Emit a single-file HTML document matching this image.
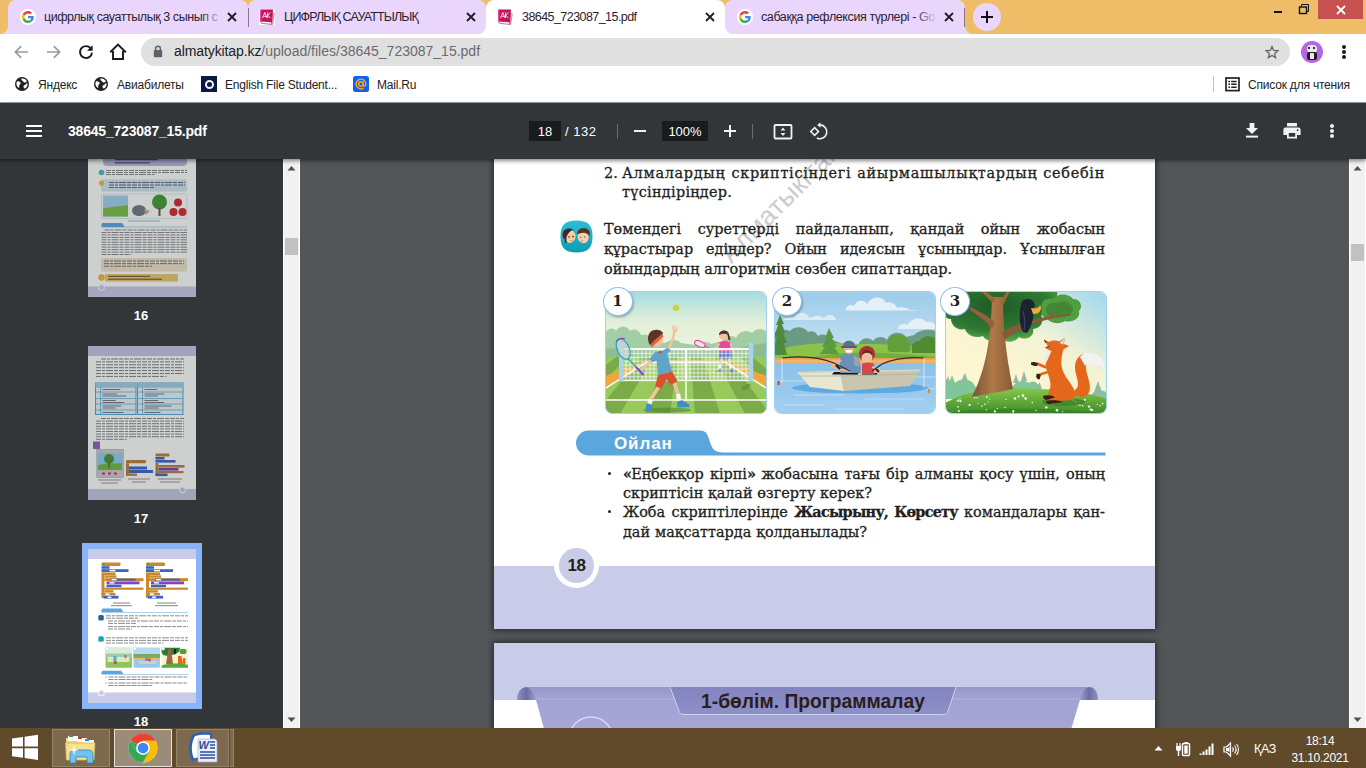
<!DOCTYPE html>
<html lang="kk">
<head>
<meta charset="utf-8">
<title>38645_723087_15.pdf</title>
<style>
*{box-sizing:border-box;margin:0;padding:0}
html,body{width:1366px;height:768px;overflow:hidden;background:#525659;font-family:"Liberation Sans","DejaVu Sans",sans-serif;}
.abs{position:absolute}
#root{position:relative;width:1366px;height:768px;overflow:hidden}
/* tab strip */
#tabstrip{position:absolute;left:0;top:0;width:1366px;height:34px;background:#efbc68}
.tab{position:absolute;top:0;height:34px;background:#ead6fd;border-radius:8px 8px 0 0}
.tab.active{background:#fff}
.tab .ttl{position:absolute;left:36px;top:10px;font-size:12.5px;color:#2b2230;white-space:nowrap;overflow:hidden;letter-spacing:-0.1px}
.tab .cls{position:absolute;top:8px;width:16px;height:16px}
.foot{position:absolute;top:26px;width:8px;height:8px}
/* toolbar */
#toolbar{position:absolute;left:0;top:34px;width:1366px;height:34px;background:#fff}
#omni{position:absolute;left:141px;top:4px;width:1149px;height:28px;border-radius:14px;background:#e0e0e0}
#bookmarks{position:absolute;left:0;top:68px;width:1366px;height:34px;background:#fff}
.bm{position:absolute;top:10px;font-size:12px;line-height:14px;color:#222;white-space:nowrap;letter-spacing:-.2px}
/* pdf toolbar */
#pdfbar{position:absolute;left:0;top:103px;width:1366px;height:56px;background:#323639;box-shadow:0 2px 4px rgba(0,0,0,.45);z-index:5;color:#fff}
#side{position:absolute;left:0;top:158px;width:283px;height:570px;background:#323639;overflow:hidden}
#sidescroll{position:absolute;left:283px;top:158px;width:17px;height:570px;background:#f1f1f1}
#main{position:absolute;left:300px;top:158px;width:1049px;height:570px;background:#525659;overflow:hidden}
#mainscroll{position:absolute;left:1349px;top:158px;width:17px;height:570px;background:#f1f1f1}
#taskbar{position:absolute;left:0;top:728px;width:1366px;height:40px;background:#604a2a;z-index:9}

#canvas{position:absolute;left:-300px;top:-158px;width:1366px;height:768px}
.page{position:absolute;left:494px;width:661px;background:#fff;box-shadow:0 0 6px 1px rgba(0,0,0,.55)}
.ln{position:absolute;font-family:"DejaVu Serif","Liberation Serif",serif;font-size:14.4px;line-height:20px;color:#231f20;white-space:nowrap;text-align:justify;text-align-last:justify;-webkit-text-stroke:.3px #231f20}
.ln b{font-weight:bold;letter-spacing:-.75px}
.num{position:absolute;width:30px;height:29px;border-radius:50%;background:#fff;border:1.5px solid #8cc4ea;box-shadow:1px 1.5px 2px rgba(60,90,120,.45);font-family:"DejaVu Serif","Liberation Serif",serif;font-weight:bold;font-size:15px;line-height:26px;text-align:center;color:#231f20}
.pic{position:absolute;top:291px;width:162px;height:123px;border-radius:7px;border:1px solid #9fd2f0;overflow:hidden}
</style>
</head>
<body>
<div id="root">

<div id="tabstrip">
<svg class="abs" style="left:0px;top:26px" width="8" height="8" viewBox="0 0 8 8"><path d="M0 8 A8 8 0 0 0 8 0 L8 8Z" fill="#ead6fd"/></svg>
<svg class="abs" style="left:248px;top:26px" width="8" height="8" viewBox="0 0 8 8"><path d="M8 8 A8 8 0 0 1 0 0 L0 8Z" fill="#ead6fd"/></svg>
<svg class="abs" style="left:240px;top:26px" width="8" height="8" viewBox="0 0 8 8"><path d="M0 8 A8 8 0 0 0 8 0 L8 8Z" fill="#ead6fd"/></svg>
<svg class="abs" style="left:486px;top:26px" width="8" height="8" viewBox="0 0 8 8"><path d="M8 8 A8 8 0 0 1 0 0 L0 8Z" fill="#ead6fd"/></svg>
<svg class="abs" style="left:717px;top:26px" width="8" height="8" viewBox="0 0 8 8"><path d="M0 8 A8 8 0 0 0 8 0 L8 8Z" fill="#ead6fd"/></svg>
<svg class="abs" style="left:965px;top:26px" width="8" height="8" viewBox="0 0 8 8"><path d="M8 8 A8 8 0 0 1 0 0 L0 8Z" fill="#ead6fd"/></svg>
<div class="tab" style="left:8px;width:240px"><svg class="abs" style="left:12px;top:9px" width="16" height="16" viewBox="0 0 48 48"><circle cx="24" cy="24" r="24" fill="#fff"/><g transform="translate(6 6) scale(.75)"><path fill="#EA4335" d="M24 9.5c3.54 0 6.71 1.22 9.21 3.6l6.85-6.85C35.9 2.38 30.47 0 24 0 14.62 0 6.51 5.38 2.56 13.22l7.98 6.19C12.43 13.72 17.74 9.5 24 9.5z"/><path fill="#4285F4" d="M46.98 24.55c0-1.57-.15-3.09-.38-4.55H24v9.02h12.94c-.58 2.96-2.26 5.48-4.78 7.18l7.73 6c4.51-4.18 7.09-10.36 7.09-17.65z"/><path fill="#FBBC05" d="M10.53 28.59c-.48-1.45-.76-2.99-.76-4.59s.27-3.14.76-4.59l-7.98-6.19C.92 16.46 0 20.12 0 24c0 3.88.92 7.54 2.56 10.78l7.97-6.19z"/><path fill="#34A853" d="M24 48c6.48 0 11.93-2.13 15.89-5.81l-7.73-6c-2.15 1.45-4.92 2.3-8.16 2.3-6.26 0-11.57-4.22-13.47-9.91l-7.98 6.19C6.51 42.62 14.62 48 24 48z"/></g></svg><div class="ttl" style="width:179px;letter-spacing:-0.44px">цифрлық сауаттылық 3 сынып с</div><div class="abs" style="left:193px;top:6px;width:22px;height:22px;background:linear-gradient(90deg,rgba(234,214,253,0),#ead6fd)"></div><svg class="abs" style="left:216px;top:9px" width="16" height="16" viewBox="0 0 16 16"><path d="M4 4 L12 12 M12 4 L4 12" stroke="#1d1d1f" stroke-width="1.8" fill="none"/></svg></div>
<div class="tab" style="left:248px;width:238px"><svg class="abs" style="left:11px;top:9px" width="16" height="16" viewBox="0 0 16 16"><rect width="16" height="16" fill="#fff"/><path d="M13.800 4.200 L15.300 4.800 L13.700 15.300 L12.400 15.500Z" fill="#f2d9e4" stroke="#a8285e" stroke-width=".5"/><path d="M1.600 12 L12.800 13 L12.600 15.400 L2.400 14.300Z" fill="#fdfdfd" stroke="#a01550" stroke-width=".6"/><path d="M1.400 .6 L14 .4 L13 13.200 L1.500 12.300 C1 9 1 4 1.400 .6Z" fill="#c8105e"/><path d="M1.400 .6 L2.600 .6 C2.200 4 2.200 9 2.600 12.400 L1.500 12.300 C1 9 1 4 1.400 .6Z" fill="#e0508c"/><path d="M3.600 9 L5.800 3.400 L8 9 M4.400 7.300 H7.200 M8.600 3.400 V9 M11.400 3.400 L8.800 6.400 L11.600 9" stroke="#fff" stroke-width=".85" fill="none"/></svg><div class="ttl" style="width:180px;letter-spacing:-0.85px">ЦИФРЛЫҚ САУАТТЫЛЫҚ</div><svg class="abs" style="left:215px;top:9px" width="16" height="16" viewBox="0 0 16 16"><path d="M4 4 L12 12 M12 4 L4 12" stroke="#1d1d1f" stroke-width="1.8" fill="none"/></svg></div>
<div class="tab active" style="left:486px;width:239px"><svg class="abs" style="left:11px;top:9px" width="16" height="16" viewBox="0 0 16 16"><rect width="16" height="16" fill="#fff"/><path d="M13.800 4.200 L15.300 4.800 L13.700 15.300 L12.400 15.500Z" fill="#f2d9e4" stroke="#a8285e" stroke-width=".5"/><path d="M1.600 12 L12.800 13 L12.600 15.400 L2.400 14.300Z" fill="#fdfdfd" stroke="#a01550" stroke-width=".6"/><path d="M1.400 .6 L14 .4 L13 13.200 L1.500 12.300 C1 9 1 4 1.400 .6Z" fill="#c8105e"/><path d="M1.400 .6 L2.600 .6 C2.200 4 2.200 9 2.600 12.400 L1.500 12.300 C1 9 1 4 1.400 .6Z" fill="#e0508c"/><path d="M3.600 9 L5.800 3.400 L8 9 M4.400 7.300 H7.200 M8.600 3.400 V9 M11.400 3.400 L8.800 6.400 L11.600 9" stroke="#fff" stroke-width=".85" fill="none"/></svg><div class="ttl" style="width:180px;letter-spacing:-0.56px">38645_723087_15.pdf</div><svg class="abs" style="left:216px;top:9px" width="16" height="16" viewBox="0 0 16 16"><path d="M4 4 L12 12 M12 4 L4 12" stroke="#1d1d1f" stroke-width="1.8" fill="none"/></svg></div>
<div class="tab" style="left:725px;width:240px"><svg class="abs" style="left:12px;top:9px" width="16" height="16" viewBox="0 0 48 48"><circle cx="24" cy="24" r="24" fill="#fff"/><g transform="translate(6 6) scale(.75)"><path fill="#EA4335" d="M24 9.5c3.54 0 6.71 1.22 9.21 3.6l6.85-6.85C35.9 2.38 30.47 0 24 0 14.62 0 6.51 5.38 2.56 13.22l7.98 6.19C12.43 13.72 17.74 9.5 24 9.5z"/><path fill="#4285F4" d="M46.98 24.55c0-1.57-.15-3.09-.38-4.55H24v9.02h12.94c-.58 2.96-2.26 5.48-4.78 7.18l7.73 6c4.51-4.18 7.09-10.36 7.09-17.65z"/><path fill="#FBBC05" d="M10.53 28.59c-.48-1.45-.76-2.99-.76-4.59s.27-3.14.76-4.59l-7.98-6.19C.92 16.46 0 20.12 0 24c0 3.88.92 7.54 2.56 10.78l7.97-6.19z"/><path fill="#34A853" d="M24 48c6.48 0 11.93-2.13 15.89-5.81l-7.73-6c-2.15 1.45-4.92 2.3-8.16 2.3-6.26 0-11.57-4.22-13.47-9.91l-7.98 6.19C6.51 42.62 14.62 48 24 48z"/></g></svg><div class="ttl" style="width:176px;letter-spacing:-0.4px">сабаққа рефлексия түрлері - Go</div><div class="abs" style="left:190px;top:6px;width:22px;height:22px;background:linear-gradient(90deg,rgba(234,214,253,0),#ead6fd)"></div><svg class="abs" style="left:216px;top:9px" width="16" height="16" viewBox="0 0 16 16"><path d="M4 4 L12 12 M12 4 L4 12" stroke="#1d1d1f" stroke-width="1.8" fill="none"/></svg></div>
<svg class="abs" style="left:478px;top:26px" width="8" height="8" viewBox="0 0 8 8"><path d="M0 8 A8 8 0 0 0 8 0 L8 8Z" fill="#fff"/></svg>
<svg class="abs" style="left:725px;top:26px" width="8" height="8" viewBox="0 0 8 8"><path d="M8 8 A8 8 0 0 1 0 0 L0 8Z" fill="#fff"/></svg>
<div class="abs" style="left:248px;top:8px;width:1px;height:19px;background:#8a7686"></div>
<div class="abs" style="left:964px;top:8px;width:1px;height:19px;background:#8a7686"></div>
<div class="abs" style="left:973px;top:3px;width:28px;height:28px;border-radius:14px;background:#ead6fd"></div><svg class="abs" style="left:979px;top:9px" width="16" height="16" viewBox="0 0 16 16"><path d="M8 2 V14 M2 8 H14" stroke="#111" stroke-width="2" fill="none"/></svg>
<div class="abs" style="left:1274px;top:11px;width:8px;height:2px;background:#111"></div>
<svg class="abs" style="left:1298px;top:3px" width="12" height="12" viewBox="0 0 12 12"><path d="M3.5 3.5 V1.5 H10.5 V8.5 H8.5" stroke="#111" stroke-width="1" fill="none"/><rect x="1.5" y="4" width="7" height="6.5" stroke="#111" stroke-width="1.4" fill="none"/></svg>
<div class="abs" style="left:1318px;top:0;width:45px;height:19px;background:#c75050"></div><svg class="abs" style="left:1335px;top:4px" width="12" height="12" viewBox="0 0 12 12"><path d="M2 2 L10 10 M10 2 L2 10" stroke="#fff" stroke-width="1.8" fill="none"/></svg>
</div>
<div id="toolbar"><div id="omni"></div>
<svg class="abs" style="left:13px;top:10px" width="16" height="16" viewBox="0 0 16 16"><path d="M15 8 H3 M8.2 2.2 L2.4 8 L8.2 13.8" stroke="#9a9a9a" stroke-width="1.7" fill="none"/></svg>
<svg class="abs" style="left:46px;top:10px" width="16" height="16" viewBox="0 0 16 16"><path d="M1 8 H13 M7.8 2.2 L13.6 8 L7.8 13.8" stroke="#9a9a9a" stroke-width="1.7" fill="none"/></svg>
<svg class="abs" style="left:78px;top:10px" width="16" height="16" viewBox="0 0 16 16"><path d="M12.6 4.2 A6 6 0 1 0 14 8.6" stroke="#1a1a1a" stroke-width="1.9" fill="none"/><path d="M14.6 1.2 V6.8 H9Z" fill="#1a1a1a"/></svg>
<svg class="abs" style="left:109px;top:9px" width="18" height="18" viewBox="0 0 18 18"><path d="M1.2 9.2 L9 1.6 L16.8 9.2 M4 8 V16 H14 V8" stroke="#1a1a1a" stroke-width="1.9" fill="none" stroke-linejoin="miter"/></svg>
<svg class="abs" style="left:153px;top:11px" width="10" height="13" viewBox="0 0 10 13"><path d="M2.6 5.5 V3.6 A2.4 2.4 0 0 1 7.4 3.6 V5.5" stroke="#5f6368" stroke-width="1.5" fill="none"/><rect x="0.8" y="5" width="8.4" height="7.2" rx="1" fill="#5f6368"/></svg>
<div class="abs" style="left:174px;top:9px;font-size:14px;line-height:17px;color:#202124;white-space:nowrap;letter-spacing:-0.1px">almatykitap.kz<span style="color:#686b6f;letter-spacing:0">/upload/files/38645_723087_15.pdf</span></div>
<svg class="abs" style="left:1264px;top:10px" width="16" height="16" viewBox="0 0 24 24"><path d="M12 3.8 L14.5 9.6 L20.8 10.1 L16 14.3 L17.5 20.5 L12 17.2 L6.5 20.5 L8 14.3 L3.2 10.1 L9.5 9.6Z" stroke="#5f6368" stroke-width="1.9" fill="none" stroke-linejoin="miter"/></svg>
<div class="abs" style="left:1301px;top:7px;width:22px;height:22px;border-radius:11px;background:#b566e2;overflow:hidden"><div class="abs" style="left:6px;top:4px;width:10px;height:8px;border-radius:4px;background:#ececec"></div><div class="abs" style="left:6px;top:11px;width:10px;height:8px;border-radius:2px;background:#1f1f1f"></div><div class="abs" style="left:9px;top:12px;width:4px;height:6px;background:#e8e8e8"></div><div class="abs" style="left:7px;top:6px;width:2px;height:2px;background:#333"></div><div class="abs" style="left:12px;top:6px;width:2px;height:2px;background:#333"></div></div>
<div class="abs" style="left:1342.3px;top:11.300px;width:3.400px;height:3.400px;border-radius:2px;background:#1a1a1a;box-shadow:0 5px 0 #1a1a1a,0 10px 0 #1a1a1a"></div>
</div>
<div id="bookmarks">
<svg class="abs" style="left:15px;top:9px" width="14" height="14" viewBox="0 0 14 14"><circle cx="7" cy="7" r="7" fill="#202124"/><path d="M2.2 4.2 C3.5 4 4.8 4.6 5.6 5.6 C6.2 6.6 5 7.4 4.4 8 C4 8.8 4.6 10.2 4 11 C2.6 10.2 1.4 8.6 1.4 6.8 C1.4 5.8 1.7 4.9 2.2 4.2Z M7.4 1.4 C9.4 1.5 11.2 2.6 12 4.4 C11 4.6 10.4 5.6 9.4 5.6 C8.6 5.4 8.4 4.4 7.6 4 C6.8 3.6 6.2 2.8 6.4 1.5Z M12.5 6.4 C12.7 8.4 11.8 10.6 9.8 11.8 C9.6 10.8 8.4 10.4 8.4 9.4 C8.6 8.2 10 8.2 10.6 7.4 C11.2 6.8 11.8 6.2 12.5 6.4Z" fill="#fff"/></svg><div class="bm" style="left:38px">Яндекс</div>
<svg class="abs" style="left:94px;top:9px" width="14" height="14" viewBox="0 0 14 14"><circle cx="7" cy="7" r="7" fill="#202124"/><path d="M2.2 4.2 C3.5 4 4.8 4.6 5.6 5.6 C6.2 6.6 5 7.4 4.4 8 C4 8.8 4.6 10.2 4 11 C2.6 10.2 1.4 8.6 1.4 6.8 C1.4 5.8 1.7 4.9 2.2 4.2Z M7.4 1.4 C9.4 1.5 11.2 2.6 12 4.4 C11 4.6 10.4 5.6 9.4 5.6 C8.6 5.4 8.4 4.4 7.6 4 C6.8 3.6 6.2 2.8 6.4 1.5Z M12.5 6.4 C12.7 8.4 11.8 10.6 9.8 11.8 C9.6 10.8 8.4 10.4 8.4 9.4 C8.6 8.2 10 8.2 10.6 7.4 C11.2 6.8 11.8 6.2 12.5 6.4Z" fill="#fff"/></svg><div class="bm" style="left:117px">Авиабилеты</div>
<div class="abs" style="left:201px;top:8px;width:16px;height:16px;background:#0a1846"></div><div class="abs" style="left:204.500px;top:11.500px;width:9px;height:9px;border-radius:5px;border:2.200px solid #f4f4f6"></div><div class="bm" style="left:225px">English File Student...</div>
<svg class="abs" style="left:353px;top:8px" width="16" height="16" viewBox="0 0 16 16"><rect width="16" height="16" rx="2.500" fill="#0a63f5"/><circle cx="8" cy="8" r="2.300" stroke="#ffa21a" stroke-width="1.500" fill="none"/><path d="M10.300 5.600 V9 C10.300 10.600 12.900 10.600 12.900 8 A4.900 4.900 0 1 0 10.600 12.200" stroke="#ffa21a" stroke-width="1.400" fill="none"/></svg><div class="bm" style="left:377px">Mail.Ru</div>
<div class="abs" style="left:1213px;top:8px;width:1px;height:16px;background:#c4c4c4"></div><svg class="abs" style="left:1225px;top:9px" width="15" height="15" viewBox="0 0 15 15"><rect x="1" y="1" width="13" height="12.6" stroke="#202124" stroke-width="1.7" fill="none"/><path d="M3.4 4.4 H5 M6.2 4.4 H11.6 M3.4 7.3 H5 M6.2 7.3 H11.6 M3.4 10.2 H5 M6.2 10.2 H11.6" stroke="#202124" stroke-width="1.5"/></svg><div class="bm" style="left:1248px">Список для чтения</div>
</div>
<div class="abs" style="left:0;top:102px;width:1366px;height:1px;background:#9b9d9f"></div>
<div id="pdfbar">
<div class="abs" style="left:26px;top:22px;width:16px;height:2px;background:#fff;box-shadow:0 5px 0 #fff,0 10px 0 #fff"></div>
<div class="abs" style="left:68px;top:20px;font-size:14px;line-height:17px;font-weight:bold;color:#fff;white-space:nowrap;letter-spacing:-0.2px">38645_723087_15.pdf</div>
<div class="abs" style="left:529px;top:18px;width:32px;height:20px;background:#191b1c;color:#fff;font-size:13px;line-height:22px;text-align:center">18</div>
<div class="abs" style="left:565px;top:18px;font-size:13px;line-height:22px;color:#fff;white-space:nowrap;letter-spacing:.5px">/ 132</div>
<div class="abs" style="left:617px;top:21px;width:1px;height:15px;background:#6a6d70"></div>
<div class="abs" style="left:634px;top:27px;width:12px;height:2px;background:#f1f1f1"></div>
<div class="abs" style="left:662px;top:18px;width:46px;height:20px;background:#191b1c;color:#fff;font-size:13px;line-height:22px;text-align:center">100%</div>
<div class="abs" style="left:724px;top:27px;width:12px;height:2px;background:#f1f1f1"></div><div class="abs" style="left:729px;top:22px;width:2px;height:12px;background:#f1f1f1"></div>
<div class="abs" style="left:752px;top:21px;width:1px;height:15px;background:#6a6d70"></div>
<svg class="abs" style="left:773px;top:20px" width="20" height="18" viewBox="0 0 20 18"><rect x="1.5" y="2" width="17" height="13.5" rx="1" stroke="#f1f1f1" stroke-width="1.8" fill="none"/><path d="M10 4.6 L12.4 7.4 H7.6Z M10 12.9 L12.4 10.1 H7.6Z" fill="#f1f1f1"/></svg>
<svg class="abs" style="left:809px;top:19px" width="20" height="20" viewBox="0 0 22 22"><path d="M12.2 3.2 A7.6 7.6 0 1 1 8.6 17.6" stroke="#f1f1f1" stroke-width="1.8" fill="none"/><path d="M12.6 0.2 V6.4 L9 3.3Z" fill="#f1f1f1"/><rect x="3.2" y="7.4" width="6" height="6" transform="rotate(45 6.2 10.4)" stroke="#f1f1f1" stroke-width="1.7" fill="none"/></svg>
<svg class="abs" style="left:1245px;top:19px" width="14" height="17" viewBox="0 0 14 17"><path d="M4.6 1 H9.4 V6 H13 L7 12 L1 6 H4.6Z" fill="#f1f1f1"/><rect x="1" y="13.6" width="12" height="2" fill="#f1f1f1"/></svg>
<svg class="abs" style="left:1283px;top:19px" width="18" height="18" viewBox="0 0 18 18"><rect x="4" y="1" width="10" height="3.4" fill="#f1f1f1"/><path d="M2.6 5.6 H15.4 A2.2 2.2 0 0 1 17.6 7.8 V13 H14 V16.6 H4 V13 H0.4 V7.8 A2.2 2.2 0 0 1 2.6 5.6Z M5.8 11 V14.8 H12.2 V11Z" fill="#f1f1f1" fill-rule="evenodd"/><circle cx="14.6" cy="8.2" r="0.9" fill="#323639"/></svg>
<div class="abs" style="left:1330px;top:21px;width:4px;height:4px;border-radius:2px;background:#f1f1f1;box-shadow:0 5px 0 #f1f1f1,0 10px 0 #f1f1f1"></div>
</div>
<div id="side"><div class="abs" style="left:0;top:-158px;width:283px;height:768px">
<svg class="abs" style="left:88px;top:143px;opacity:.76" width="108" height="154" viewBox="0 0 108 154">
<rect width="108" height="154" fill="#fff"/>
<rect x="15" y="13" width="84" height="10" rx="4" fill="#b8b8e2"/><path d="M27 16.500 H70 M27 19.800 H62" stroke="#4a4a78" stroke-width="1.300"/>
<circle cx="13.500" cy="29.500" r="2.800" fill="#56b7c9"/><path d="M18.0 27.5 H99.0 M18.0 29.5 H99.0 M18.0 31.5 H66.6 " stroke="#777" stroke-width="0.9" stroke-dasharray="5 1 3 1 7 1 4 1" fill="none"/>
<rect x="13" y="36.500" width="86" height="12" rx="1.500" fill="#cfe6ee"/><circle cx="13.500" cy="40" r="2.600" fill="#e7c23a"/><path d="M21.0 39.5 H97.0 M21.0 42.0 H97.0 M21.0 44.5 H66.6 " stroke="#557" stroke-width="0.9" stroke-dasharray="5 1 3 1 7 1 4 1" fill="none"/>
<rect x="13.500" y="51" width="85.500" height="24.500" rx="1.500" fill="#fff" stroke="#bfe0f0" stroke-width=".7"/>
<rect x="15" y="52.500" width="25" height="21" fill="#9fd3f0"/><path d="M15 66 C22 63 32 64 40 62 V73.500 H15Z" fill="#7cc043"/>
<ellipse cx="51" cy="67.500" rx="7" ry="5.500" fill="#6c7a86"/><path d="M56 66 l6 2 l-4 4Z" fill="#d9a77c"/>
<circle cx="71.500" cy="59" r="7.500" fill="#3f9a35"/><rect x="70.500" y="65" width="2" height="8" fill="#7a5230"/>
<circle cx="90" cy="59.500" r="4" fill="#d8262c"/><circle cx="85.500" cy="69" r="4" fill="#d8262c"/><circle cx="94.500" cy="69" r="4" fill="#d8262c"/>
<path d="M40 78 H72" stroke="#999" stroke-width=".8"/>
<path d="M15 80 H34 L36.500 83.700 H99 V84.300 H13.500 V81.500 A1.500 1.500 0 0 1 15 80Z" fill="#5ba6dc"/>
<path d="M16.5 87.0 H99.0 M13.5 89.5 H99.0 M13.5 91.9 H99.0 M13.5 94.4 H99.0 M13.5 96.8 H99.0 M13.5 99.3 H99.0 M13.5 101.7 H99.0 M13.5 104.2 H99.0 M13.5 106.6 H99.0 M13.5 109.1 H99.0 M13.5 111.5 H43.4 " stroke="#85858a" stroke-width="1.0" stroke-dasharray="5 1 3 1 7 1 4 1" fill="none"/>
<rect x="13" y="115" width="86" height="13.500" rx="1.500" fill="#efe4cf"/><path d="M16.0 118.0 H96.0 M16.0 120.6 H96.0 M16.0 123.2 H64.0 " stroke="#6a6a6a" stroke-width="0.9" stroke-dasharray="5 1 3 1 7 1 4 1" fill="none"/>
<rect x="17" y="131" width="73" height="7.500" rx="1" fill="#ecc96f"/><circle cx="13.500" cy="134.500" r="3.200" fill="#f0b630"/><path d="M20 133.300 H62 M20 136.200 H74" stroke="#5a4a20" stroke-width="1"/>
<rect y="143.500" width="108" height="10.500" fill="#c9cce8"/><circle cx="13.500" cy="144.500" r="3" fill="#c9cce8" stroke="#fff" stroke-width="1"/>
</svg><div class="abs" style="left:111px;top:308px;width:60px;text-align:center;font-size:13px;line-height:16px;font-weight:bold;color:#fff">16</div>
<svg class="abs" style="left:88px;top:346px;opacity:.76" width="108" height="154" viewBox="0 0 108 154">
<rect width="108" height="154" fill="#fff"/><rect width="108" height="10" fill="#c4c8e4"/>
<path d="M13.0 13.0 H96.0 M8.0 15.9 H96.0 M8.0 18.8 H96.0 M8.0 21.7 H96.0 M8.0 24.6 H96.0 M8.0 27.5 H96.0 M8.0 30.4 H78.4 " stroke="#7c7c82" stroke-width="1.0" stroke-dasharray="5 1 3 1 7 1 4 1" fill="none"/>
<rect x="7.5" y="37" width="40.5" height="31.5" fill="#e9f5fb" stroke="#4fa9d6" stroke-width="1"/><path d="M7.5 41 H48" stroke="#4fa9d6" stroke-width=".7"/><path d="M7.5 46 H48" stroke="#4fa9d6" stroke-width=".7"/><path d="M7.5 52.5 H48" stroke="#4fa9d6" stroke-width=".7"/><path d="M7.5 58 H48" stroke="#4fa9d6" stroke-width=".7"/><path d="M7.5 64 H48" stroke="#4fa9d6" stroke-width=".7"/><path d="M12.5 37 V68.5" stroke="#4fa9d6" stroke-width=".7"/><rect x="7.5" y="37" width="40.5" height="4" fill="#9fd0ea"/><path d="M14.5 43.5 H32.3" stroke="#556" stroke-width=".8"/><path d="M14.5 48 H29.2" stroke="#556" stroke-width=".8"/><path d="M14.5 50 H38.2" stroke="#556" stroke-width=".8"/><path d="M14.5 54.5 H27.8" stroke="#556" stroke-width=".8"/><path d="M14.5 56.5 H36.1" stroke="#556" stroke-width=".8"/><path d="M14.5 60 H33.1" stroke="#556" stroke-width=".8"/><path d="M14.5 62 H27.5" stroke="#556" stroke-width=".8"/><path d="M14.5 66.5 H35.6" stroke="#556" stroke-width=".8"/><rect x="49.5" y="37" width="45.5" height="31.5" fill="#e9f5fb" stroke="#4fa9d6" stroke-width="1"/><path d="M49.5 41 H95" stroke="#4fa9d6" stroke-width=".7"/><path d="M49.5 46 H95" stroke="#4fa9d6" stroke-width=".7"/><path d="M49.5 52.5 H95" stroke="#4fa9d6" stroke-width=".7"/><path d="M49.5 58 H95" stroke="#4fa9d6" stroke-width=".7"/><path d="M49.5 64 H95" stroke="#4fa9d6" stroke-width=".7"/><path d="M54.5 37 V68.5" stroke="#4fa9d6" stroke-width=".7"/><rect x="49.5" y="37" width="45.5" height="4" fill="#9fd0ea"/><path d="M56.5 43.5 H69.2" stroke="#556" stroke-width=".8"/><path d="M56.5 48 H76.3" stroke="#556" stroke-width=".8"/><path d="M56.5 50 H69.8" stroke="#556" stroke-width=".8"/><path d="M56.5 54.5 H70.1" stroke="#556" stroke-width=".8"/><path d="M56.5 56.5 H76.1" stroke="#556" stroke-width=".8"/><path d="M56.5 60 H83.4" stroke="#556" stroke-width=".8"/><path d="M56.5 62 H70.7" stroke="#556" stroke-width=".8"/><path d="M56.5 66.5 H72.5" stroke="#556" stroke-width=".8"/>
<path d="M13.0 72.5 H96.0 M8.0 75.1 H96.0 M8.0 77.7 H96.0 M8.0 80.3 H96.0 M8.0 82.9 H96.0 M8.0 85.5 H96.0 M8.0 88.1 H96.0 M8.0 90.7 H96.0 M8.0 93.3 H38.8 " stroke="#85858a" stroke-width="1.0" stroke-dasharray="5 1 3 1 7 1 4 1" fill="none"/>
<rect x="5" y="95.500" width="7" height="7.500" fill="#8a62b8"/>
<rect x="8.800" y="103.500" width="26.500" height="28" fill="#c9cdd2" stroke="#9aa" stroke-width=".6"/><rect x="10" y="107" width="24" height="17" fill="#8fd0f2"/><path d="M10 119 C18 117 28 118 34 117 V124 H10Z" fill="#71b944"/><circle cx="21" cy="113" r="5" fill="#3f9a35"/><circle cx="19" cy="112" r="1" fill="#d33"/><circle cx="23" cy="114.500" r="1" fill="#d33"/><rect x="20.300" y="117" width="1.400" height="5" fill="#7a5230"/>
<path d="M14 127.500 h3 m3 0 h3 m3 0 h3" stroke="#d33" stroke-width="1.800"/>
<rect x="38" y="114" width="20" height="3.200" rx="1" fill="#b5803a"/><rect x="38" y="117.200" width="3" height="12.500" fill="#b5803a"/><rect x="41" y="120.500" width="18" height="3" fill="#3c63c8"/><rect x="41" y="124" width="24" height="3" fill="#3c63c8"/><rect x="38" y="127.500" width="11" height="2.400" fill="#b5803a"/>
<rect x="67.500" y="107.500" width="14" height="3" rx="1" fill="#b5803a"/><rect x="67.500" y="111" width="9" height="2.500" fill="#3c63c8"/><rect x="67.500" y="114" width="20" height="2.600" fill="#3c63c8"/><rect x="67.500" y="117" width="3" height="12" fill="#b5803a"/><rect x="70.500" y="119" width="26" height="2.600" fill="#b5803a"/><rect x="70.500" y="122" width="20" height="2.600" fill="#7a3fb0"/><rect x="70.500" y="125" width="25" height="2.200" fill="#b5803a"/><rect x="67.500" y="127.500" width="12" height="2.600" fill="#3c63c8"/>
<path d="M10 134 H33 M13 137 H30 M40 133 H62 M44 136 H58 M70 133 H94 M72 136 H92" stroke="#777" stroke-width=".8"/>
<rect y="143" width="108" height="11" fill="#c4c8e4"/><circle cx="94.500" cy="144" r="3" fill="#c4c8e4" stroke="#fff" stroke-width="1"/>
</svg><div class="abs" style="left:111px;top:511px;width:60px;text-align:center;font-size:13px;line-height:16px;font-weight:bold;color:#fff">17</div>
<div class="abs" style="left:82px;top:543px;width:120px;height:166px;background:#8ab4f8"></div>
<svg class="abs" style="left:88px;top:549px" width="108" height="154" viewBox="0 0 108 154">
<rect width="108" height="154" fill="#fff"/><rect width="108" height="10" fill="#c9cce8"/>
<rect x="13.5" y="13.500" width="19" height="3.400" rx="1.200" fill="#c88a2a"/><rect x="14.5" y="14.300" width="2" height="1.800" fill="#3aa84a"/>
<rect x="13.5" y="17.200" width="8" height="2.600" fill="#3b63c9"/><rect x="13.5" y="20.200" width="27" height="2.800" fill="#3b63c9"/><rect x="21.5" y="20.800" width="6" height="1.600" fill="#fff"/>
<rect x="13.5" y="23.400" width="14" height="2.600" fill="#c88a2a"/><rect x="13.5" y="26" width="3" height="23" fill="#c88a2a"/><rect x="16.5" y="26.300" width="12" height="2.400" fill="#c88a2a"/>
<rect x="16.5" y="29.200" width="39" height="3" fill="#c88a2a"/><rect x="22.5" y="29.700" width="25" height="2" fill="#3b63c9"/><rect x="23.5" y="30" width="5" height="1.400" fill="#fff"/>
<rect x="18.5" y="32.500" width="33" height="2.800" fill="#8a3fc0"/><rect x="21.5" y="33.200" width="5" height="1.400" fill="#fff"/>
<rect x="18.5" y="35.700" width="15" height="2.500" fill="#3b63c9"/><rect x="16.5" y="38.600" width="39" height="2.200" fill="#c88a2a"/>
<rect x="16.5" y="41.200" width="9" height="2.400" fill="#c88a2a"/><rect x="13.5" y="44" width="14" height="2.400" fill="#c88a2a"/><rect x="17.5" y="44.400" width="4" height="1.500" fill="#fff"/>
<rect x="15.5" y="46.800" width="15" height="2.800" fill="#3b63c9"/><rect x="19.5" y="47.400" width="4" height="1.500" rx=".7" fill="#fff"/><rect x="58" y="13.500" width="19" height="3.400" rx="1.200" fill="#c88a2a"/><rect x="59" y="14.300" width="2" height="1.800" fill="#3aa84a"/>
<rect x="58" y="17.200" width="8" height="2.600" fill="#3b63c9"/><rect x="58" y="20.200" width="27" height="2.800" fill="#3b63c9"/><rect x="66" y="20.800" width="6" height="1.600" fill="#fff"/>
<rect x="58" y="23.400" width="14" height="2.600" fill="#c88a2a"/><rect x="58" y="26" width="3" height="23" fill="#c88a2a"/><rect x="61" y="26.300" width="12" height="2.400" fill="#c88a2a"/>
<rect x="61" y="29.200" width="39" height="3" fill="#c88a2a"/><rect x="67" y="29.700" width="25" height="2" fill="#3b63c9"/><rect x="68" y="30" width="5" height="1.400" fill="#fff"/>
<rect x="63" y="32.500" width="33" height="2.800" fill="#8a3fc0"/><rect x="66" y="33.200" width="5" height="1.400" fill="#fff"/>
<rect x="63" y="35.700" width="15" height="2.500" fill="#3b63c9"/><rect x="61" y="38.600" width="39" height="2.200" fill="#c88a2a"/>
<rect x="61" y="41.200" width="9" height="2.400" fill="#c88a2a"/><rect x="58" y="44" width="14" height="2.400" fill="#c88a2a"/><rect x="62" y="44.400" width="4" height="1.500" fill="#fff"/>
<rect x="60" y="46.800" width="15" height="2.800" fill="#3b63c9"/><rect x="64" y="47.400" width="4" height="1.500" rx=".7" fill="#fff"/>
<path d="M25 54 H42 M23 56.700 H44 M69 54 H88 M67 56.700 H90" stroke="#666" stroke-width=".8"/>
<path d="M15 59.500 H33 L35.500 63 H100 V63.600 H13.500 V61 A1.500 1.500 0 0 1 15 59.500Z" fill="#5ba6dc"/>
<rect x="10.300" y="66" width="5.500" height="5.500" rx="1.500" fill="#2a5f9e"/>
<path d="M18.0 66.8 H100.0 M18.0 69.2 H50.8 " stroke="#7c7c82" stroke-width="0.9" stroke-dasharray="5 1 3 1 7 1 4 1" fill="none"/>
<path d="M20.0 72.0 H100.0 M20.0 74.4 H48.0 " stroke="#7c7c82" stroke-width="0.9" stroke-dasharray="5 1 3 1 7 1 4 1" fill="none"/>
<path d="M20.0 77.6 H100.0 M20.0 80.0 H44.0 " stroke="#7c7c82" stroke-width="0.9" stroke-dasharray="5 1 3 1 7 1 4 1" fill="none"/>
<rect x="10.300" y="87.300" width="5.500" height="5.500" rx="1.500" fill="#16a8bd"/>
<path d="M18.0 88.8 H100.0 M18.0 91.4 H100.0 M18.0 94.0 H75.4 " stroke="#7c7c82" stroke-width="0.9" stroke-dasharray="5 1 3 1 7 1 4 1" fill="none"/>
<rect x="17.600" y="98.700" width="26.400" height="20" rx="1.200" fill="#8dc556"/><rect x="17.600" y="98.700" width="26.400" height="7" fill="#dbeedd"/><rect x="17.600" y="104.500" width="26.400" height="4" fill="#a3cda5"/><rect x="19.500" y="108" width="22" height="5" fill="#eef5ea" opacity=".75"/><rect x="25.500" y="107" width="3" height="6" fill="#5ea5c9"/><rect x="25.800" y="112.500" width="3" height="2.500" fill="#d8512c"/><rect x="36.500" y="106" width="2" height="3" fill="#e8489b"/>
<rect x="45.500" y="98.700" width="26.400" height="20" rx="1.200" fill="#98c8ed"/><rect x="45.500" y="98.700" width="26.400" height="7" fill="#b5d9f0"/><rect x="45.500" y="105" width="26.400" height="4" fill="#79a965"/><rect x="45.500" y="108.800" width="26.400" height="1.200" fill="#f0b368"/><path d="M49.500 112 H69 L67.500 115 H52Z" fill="#d2d1ba"/><rect x="57" y="108.500" width="3" height="3.500" fill="#6b8fb6"/><rect x="60.300" y="109.500" width="2.500" height="2.800" fill="#d84848"/>
<rect x="73.600" y="98.700" width="26.400" height="20" rx="1.200" fill="#f4f3d2"/><path d="M73.600 98.700 H92 C92 104 86 106 82 106 C78 108 74 106 73.600 103Z" fill="#2f7a33"/><path d="M80.500 99.500 H83 L85 115 H78Z" fill="#9a683c"/><path d="M73.600 116.500 C82 114 92 114 100 116 V118.700 H73.600Z" fill="#5aa838"/><path d="M90 107 h3.500 l1.500 8 h-5Z" fill="#e8641b"/><rect x="95" y="109" width="2.500" height="6" rx="1" fill="#e8641b"/><rect x="86" y="100" width="2" height="5" fill="#1c2230"/><rect x="91.500" y="100" width="7" height="5" rx="2" fill="#4f9e40"/>
<circle cx="19" cy="99.500" r="1.800" fill="#fff" stroke="#8cc4ea" stroke-width=".4"/><circle cx="47" cy="99.500" r="1.800" fill="#fff" stroke="#8cc4ea" stroke-width=".4"/><circle cx="75" cy="99.500" r="1.800" fill="#fff" stroke="#8cc4ea" stroke-width=".4"/>
<path d="M15 121.800 H33 L35.500 125 H100 V125.600 H13.500 V123.300 A1.500 1.500 0 0 1 15 121.800Z" fill="#5ba6dc"/>
<circle cx="18" cy="128" r=".5" fill="#333"/><circle cx="18" cy="134" r=".5" fill="#333"/>
<path d="M20.5 128.0 H100.0 M20.5 130.5 H64.2 " stroke="#7c7c82" stroke-width="0.9" stroke-dasharray="5 1 3 1 7 1 4 1" fill="none"/>
<path d="M20.5 134.0 H100.0 M20.5 136.5 H64.2 " stroke="#7c7c82" stroke-width="0.9" stroke-dasharray="5 1 3 1 7 1 4 1" fill="none"/>
<rect y="143.500" width="108" height="10.500" fill="#c9cce8"/><circle cx="13.300" cy="144" r="3.300" fill="#fff"/><circle cx="13.300" cy="144" r="2.500" fill="#c9cce8"/>
</svg><div class="abs" style="left:111px;top:714px;width:60px;text-align:center;font-size:13px;line-height:16px;font-weight:bold;color:#fff">18</div>
</div></div><!--eside-->
<div id="sidescroll" class="abs" style="left:283px;top:158px;width:17px;height:570px;background:#f1f1f1;box-shadow:inset 1px 0 0 #fff,inset -1px 0 0 #fff">
<svg class="abs" style="left:4px;top:7px" width="9" height="6" viewBox="0 0 9 6"><path d="M0.500 5.500 L4.500 1 L8.500 5.500Z" fill="#505050"/></svg>
<div class="abs" style="left:2px;top:80px;width:13px;height:17px;background:#c1c1c1"></div>
<svg class="abs" style="left:4px;top:559px" width="9" height="6" viewBox="0 0 9 6"><path d="M0.500 0.500 L4.500 5 L8.500 0.500Z" fill="#505050"/></svg>
</div>
<div id="main"><div id="canvas">
<div class="page" id="p1" style="top:60px;height:569px"></div>
<div class="abs" style="left:494px;top:566px;width:661px;height:63px;background:#c9cce8"></div>
<div class="page" id="p2" style="top:643px;height:200px;background:#fff;overflow:hidden">
<div class="abs" style="left:0;top:0;width:661px;height:57px;background:#c9cce8"></div>
<svg class="abs" style="left:0;top:40px" width="661" height="60" viewBox="0 0 661 60">
<defs><linearGradient id="bn" x1="0" y1="0" x2="0" y2="1"><stop offset="0" stop-color="#9696c9"/><stop offset=".22" stop-color="#a3a3d3"/><stop offset="1" stop-color="#a7a8d7"/></linearGradient>
<linearGradient id="tb" x1="0" y1="0" x2="0" y2="1"><stop offset="0" stop-color="#8384c0"/><stop offset="1" stop-color="#8e90c9"/></linearGradient>
<linearGradient id="rl" x1="0" y1="0" x2="1" y2="0"><stop offset="0" stop-color="#8f91c4"/><stop offset=".5" stop-color="#6a6ea4"/><stop offset="1" stop-color="#9a9ccd"/></linearGradient>
<linearGradient id="rr" x1="1" y1="0" x2="0" y2="0"><stop offset="0" stop-color="#8f91c4"/><stop offset=".5" stop-color="#6a6ea4"/><stop offset="1" stop-color="#9a9ccd"/></linearGradient></defs>
<path d="M23 17 C23 8 28 4 32.500 4 C37 4 42 8 42 17Z" fill="url(#rl)"/>
<path d="M604 17 C604 8 600 4 595 4 C590 4 586 8 586 17Z" fill="url(#rr)"/>
<path d="M32 4 H595 C590 5 588 10 586 17 L573 60 H54 L42 17 C40 10 37 5 32 4Z" fill="url(#bn)"/>
<path d="M42 16 H586" stroke="#c9cce8" stroke-width=".6" opacity=".7"/>
<path d="M176 4 H462 L454 28 C453.300 30.500 452 31.500 449 31.500 H190 C187 31.500 185.700 30.500 185 28Z" fill="url(#tb)"/>
<path d="M176 4 L185 28 C185.700 30.500 187 31.500 190 31.500 H449 C452 31.500 453.300 30.500 454 28 L462 4" stroke="#cfd1ec" stroke-width="1" fill="none"/>
<circle cx="97" cy="56" r="22" stroke="#d9daf0" stroke-width="1.600" fill="none"/>
<text x="207" y="24.500" font-family="'Liberation Sans','DejaVu Sans',sans-serif" font-weight="bold" font-size="21" fill="#2a1e1c" textLength="224" lengthAdjust="spacingAndGlyphs">1-бөлім. Программалау</text>
</svg>
</div>
<div class="abs" style="left:734px;top:241px;transform-origin:0 100%;transform:rotate(-45deg);font-size:26.500px;line-height:26px;color:#cbcbcb;white-space:nowrap;letter-spacing:.2px">Алматыкітап</div>
<div class="ln" style="left:604px;top:163px;width:16px">2.</div><div class="ln" style="left:622px;top:163px;width:483px;letter-spacing:.72px">Алмалардың скриптісіндегі айырмашылықтардың себебін</div><div class="ln" style="left:622px;top:182px;width:114px;letter-spacing:.3px">түсіндіріңдер.</div><div class="ln" style="left:604px;top:219px;width:501px">Төмендегі суреттерді пайдаланып, қандай ойын жобасын</div><div class="ln" style="left:604px;top:239px;width:501px">құрастырар едіңдер? Ойын идеясын ұсыныңдар. Ұсынылған</div><div class="ln" style="left:604px;top:259px;width:348px">ойындардың алгоритмін сөзбен сипаттаңдар.</div><div class="abs" style="left:608px;top:472px;width:3px;height:3px;border-radius:50%;background:#231f20"></div><div class="ln" style="left:623px;top:464px;width:482px"><b>«</b>Еңбекқор кірпі<b>»</b> жобасына тағы бір алманы қосу үшін, оның</div><div class="ln" style="left:623px;top:483px;width:249px">скриптісін қалай өзгерту керек?</div><div class="abs" style="left:608px;top:510px;width:3px;height:3px;border-radius:50%;background:#231f20"></div><div class="ln" style="left:623px;top:502px;width:482px">Жоба скриптілерінде <b>Жасырыну, Көрсету</b> командалары қан-</div><div class="ln" style="left:623px;top:522px;width:244px">дай мақсаттарда қолданылады?</div><svg class="abs" style="left:560px;top:220px" width="33" height="33" viewBox="0 0 33 33"><defs><linearGradient id="kg" x1="0" y1="0" x2="0" y2="1"><stop offset="0" stop-color="#2cbfd3"/><stop offset="1" stop-color="#0b9db2"/></linearGradient></defs><path d="M16.5 0.5 C28 0.5 32.5 5 32.5 16.5 C32.5 28 28 32.5 16.5 32.5 C5 32.5 0.5 28 0.5 16.5 C0.5 5 5 0.5 16.5 0.5Z" fill="url(#kg)"/><ellipse cx="10" cy="16.5" rx="5.6" ry="6.4" fill="#f6cfa6" transform="rotate(12 10 16.5)"/><path d="M2.6 15 C2.4 9 8 7 13.6 9.4 C10 10.6 7.6 13.4 6.4 17.6 L6.6 23 C5 23.6 4.4 22 5 19.6 C3.4 18.6 2.8 17 2.6 15Z" fill="#4a2424"/><ellipse cx="23.2" cy="16.6" rx="5.6" ry="6.6" fill="#f6cfa6" transform="rotate(-8 23.2 16.6)"/><path d="M17.4 14.4 C17 9 22 7.4 26 8.6 C29.6 9.6 30.4 13 29.2 16.4 C28 14 26 12.6 23 12.8 C21 13 19 13.6 17.4 14.4Z" fill="#5a3020"/><circle cx="9" cy="17" r=".8" fill="#222"/><circle cx="13" cy="16.6" r=".8" fill="#222"/><circle cx="20.6" cy="17.2" r=".7" fill="#568"/><circle cx="24.6" cy="17" r=".7" fill="#568"/><path d="M10.6 20.6 h2" stroke="#e06a6a" stroke-width="1"/><path d="M20.8 21 h2" stroke="#e06a6a" stroke-width="1"/></svg>
<div class="pic" id="pic1" style="left:605px"><svg width="162" height="123" viewBox="0 0 162 123" style="display:block;margin:-1px">
<defs><linearGradient id="s1" x1="0" y1="0" x2="0" y2="1"><stop offset="0" stop-color="#a3dbe0"/><stop offset=".45" stop-color="#e3f0d9"/><stop offset="1" stop-color="#f3f3dc"/></linearGradient></defs>
<rect width="162" height="70" fill="url(#s1)"/>
<path d="M0 42 C4 36 9 37 11 40 C14 34 22 34 25 40 C29 37 34 39 36 44 C42 42 46 46 48 50 L60 52 C66 48 72 48 76 52 L90 54 C96 50 102 50 106 53 L118 50 C122 44 128 44 131 47 C134 40 142 38 147 42 C151 37 158 37 162 41 V70 H0Z" fill="#a3cda5"/>
<path d="M0 58 C20 55 40 60 60 60 H110 C130 60 140 54 162 52 V70 H0Z" fill="#8dbd8e"/>
<rect y="66" width="162" height="57" fill="#98c95a"/>
<path d="M11.1 66 L23.5 66 L-35 123 L-60 123Z" fill="#7aab48"/><path d="M35.9 66 L48.3 66 L15 123 L-10 123Z" fill="#7aab48"/><path d="M60.7 66 L73.1 66 L65 123 L40 123Z" fill="#7aab48"/><path d="M85.5 66 L97.8 66 L115 123 L90 123Z" fill="#7aab48"/><path d="M110.2 66 L122.6 66 L165 123 L140 123Z" fill="#7aab48"/><path d="M135.0 66 L147.4 66 L215 123 L190 123Z" fill="#7aab48"/>
<path d="M41 69.800 L0 85 V96.500 L41 71.800Z" fill="#f0a63a"/><path d="M121 69.800 L162 85 V96.500 L121 71.800Z" fill="#f0a63a"/>
<path d="M41 69.600 H121 V71.400 H41Z" fill="#f0b050"/>
<path d="M0 97.500 L41 71.600 M162 97.500 L121 71.600 M0 109 H162 M81 89 V109 M41 71.600 H121" stroke="#fff" stroke-width="1.400" fill="none"/>
<!-- girl -->
<path d="M116.400 67 L114.800 77 M123.800 67 L125.600 77.500" stroke="#f1c39c" stroke-width="2" fill="none"/>
<path d="M113.800 73.500 h2.200 v3.800 h-2.200Z M124.500 73.800 h2.200 v3.800 h-2.200Z" fill="#f4f7fa"/>
<path d="M110.200 81 l5.800 -3.800 l.6 3.400Z M124.400 77.600 l3.400 -.2 l.6 4.400 l-4 -.4Z" fill="#5a4fc0"/>
<path d="M114.600 60 H126.400 L127.200 67.600 H113.800Z" fill="#4a56b8"/>
<path d="M113.600 51.500 L119.500 49.600 L125.700 51.500 L125.600 60.600 H114.400Z" fill="#e8489b"/>
<path d="M114.400 53.200 L108.400 58.400 L105 57" stroke="#f1c39c" stroke-width="1.700" fill="none" stroke-linecap="round"/><path d="M125.400 52.800 L128.600 62" stroke="#f1c39c" stroke-width="1.700" fill="none" stroke-linecap="round"/>
<circle cx="118.600" cy="44.800" r="4.400" fill="#f1c39c"/><path d="M114 44 C113.600 39 122.500 37.600 123.800 42.500 L125.600 49.500 L123.400 48.600 L122.400 43.400 C119.500 42.400 116.500 42.600 114 44Z" fill="#4a2a22"/><path d="M114.200 43 L123 41.800" stroke="#3f4fb5" stroke-width="1"/>
<ellipse cx="94.800" cy="53" rx="5.600" ry="2.800" transform="rotate(24 94.800 53)" fill="#e6e6e6" stroke="#e8489b" stroke-width="1.100"/><path d="M99.600 55.200 L105 57.200" stroke="#e8489b" stroke-width="1.100"/>
<!-- net -->
<rect x="17" y="57.500" width="128" height="32" fill="#e4f0e2" opacity=".22"/>
<path d="M17 58 V89.500 M21 58 V89.500 M25 58 V89.500 M29 58 V89.500 M33 58 V89.500 M37 58 V89.500 M41 58 V89.500 M45 58 V89.500 M49 58 V89.500 M53 58 V89.500 M57 58 V89.500 M61 58 V89.500 M65 58 V89.500 M69 58 V89.500 M73 58 V89.500 M77 58 V89.500 M81 58 V89.500 M85 58 V89.500 M89 58 V89.500 M93 58 V89.500 M97 58 V89.500 M101 58 V89.500 M105 58 V89.500 M109 58 V89.500 M113 58 V89.500 M117 58 V89.500 M121 58 V89.500 M125 58 V89.500 M129 58 V89.500 M133 58 V89.500 M137 58 V89.500 M141 58 V89.500 M145 58 V89.500 M17 58.5 H145 M17 62.4 H145 M17 66.3 H145 M17 70.2 H145 M17 74.1 H145 M17 78.0 H145 M17 81.9 H145 M17 85.8 H145 M17 89.7 H145 " stroke="#fff" stroke-width=".7" fill="none" opacity=".95"/>
<rect x="16" y="57" width="130" height="2" fill="#fff"/><rect x="16" y="88.800" width="130" height="1.200" fill="#fff"/><rect x="79.800" y="59" width="2.400" height="30" fill="#fff" opacity=".9"/>
<rect x="14" y="52" width="4.600" height="38.500" fill="#a8d2ee"/><rect x="143.600" y="52" width="4.600" height="38.500" fill="#a8d2ee"/>
<ellipse cx="141" cy="96" rx="5" ry="2.200" transform="rotate(-30 141 96)" fill="#5e8f3a" opacity=".7"/>
<!-- boy -->
<ellipse cx="62" cy="119" rx="24" ry="2.500" fill="#4f8033" opacity=".55"/>
<path d="M54 95 L45.500 109 M69 91 L73.300 104" stroke="#f1c39c" stroke-width="3.600" fill="none" stroke-linecap="round"/>
<path d="M43.600 107.500 l4.400 1.600 l-1.400 4.400 l-4.200 -1.400Z M71 103.200 l4.200 -.8 l1.200 7.600 l-4.400 .8Z" fill="#f4f7fa"/>
<path d="M41.500 112.500 l6 1.500 l-.8 6.500 l-6.200 -.8Z M72 110.500 l5 -1.200 l7.400 4.300 v2.400 l-12 .4Z" fill="#3f8fc4"/>
<path d="M52.800 84 L67 80.400 L72.600 90.300 L65.800 94 L61.500 88.400 L56.500 97.700 L50.400 95.200Z" fill="#d8512c"/>
<path d="M49.700 61.200 L57.200 60 L64 55.600 L65.800 60 L62.100 62.400 L67 80.400 L52.800 84 L51.600 69.800 L46 71.700 L44.200 68.600Z" fill="#5ea5c9"/>
<path d="M53 60.600 L57.200 60 L57 62 L54 62.500Z" fill="#d8512c"/>
<path d="M64 57 L68.500 46 L69.500 39" stroke="#f1c39c" stroke-width="2.600" fill="none" stroke-linecap="round"/><path d="M68.500 40 l-1 -5 m2.200 5 l.2 -5.500 m1.200 6 l1.600 -4.600" stroke="#f1c39c" stroke-width="1.200" stroke-linecap="round"/>
<path d="M45.400 70.500 L38.500 77 L35.500 79.700" stroke="#f1c39c" stroke-width="2.600" fill="none" stroke-linecap="round"/>
<circle cx="51.500" cy="49" r="6.600" fill="#f1c39c"/>
<path d="M43.500 51 C41.500 43 46 38.500 52 38.800 C56 39 58 41 58 43 L49 50 L47.500 55.500 C45.500 55 44 53 43.500 51Z" fill="#5c3524"/>
<path d="M45.200 53.500 L57 42.800 L58.500 45.600 L46.800 56.300Z" fill="#e8603a"/>
<ellipse cx="18.200" cy="58" rx="6" ry="10.800" transform="rotate(-24 18.200 58)" fill="#c9d6d6" fill-opacity=".65" stroke="#2aa7c9" stroke-width="1.300"/><path d="M23 67.500 L31 76" stroke="#2aa7c9" stroke-width="1.600"/><path d="M31 76 L38.600 84" stroke="#7d4bc0" stroke-width="2"/><path d="M11.500 50.500 C13 47.500 17 46.500 20 48" stroke="#7d4bc0" stroke-width="1.300" fill="none"/>
<circle cx="71" cy="16.800" r="3.300" fill="#c9d43a"/>
</svg></div><!--e1--><div class="pic" id="pic2" style="left:774px"><svg width="162" height="123" viewBox="0 0 162 123" style="display:block;margin:-1px">
<defs><linearGradient id="s2" x1="0" y1="0" x2="0" y2="1"><stop offset="0" stop-color="#9ccbeb"/><stop offset="1" stop-color="#cfe7f4"/></linearGradient>
<linearGradient id="w2" x1="0" y1="0" x2="0" y2="1"><stop offset="0" stop-color="#8cc1ea"/><stop offset="1" stop-color="#a4cff0"/></linearGradient></defs>
<rect width="162" height="75" fill="url(#s2)"/>
<path d="M72 19 C72 14 78 13 80 15 C82 9 90 8 93 13 C96 6 108 3 112 12 C116 10 122 13 123 17 C128 15 134 17 136 19 H142 V19.500 H72Z" fill="#e3f0f8"/>
<path d="M124 37 C125 33 131 32 134 34 C136 27 148 25 152 31 C156 30 160 32 162 34 V38 H124Z" fill="#e3f0f8"/>
<path d="M9 29 C12 26 18 26 20 27 C22 21 31 20 34 25 L36 27 C40 24 46 24 50 27 C54 22 61 24 62 29Z" fill="#dcecf6"/>
<path d="M0 42 C6 38 12 38 16 40 C20 35 30 35 34 41 C38 39 42 41 44 45 C48 42 54 44 56 48 L72 54 V62 H0Z" fill="#6c9b84"/>
<path d="M85 52 C88 46 96 46 99 50 C102 45 110 45 113 49 C116 40 128 40 132 46 L140 44 C146 38 156 38 162 40 V62 H85Z" fill="#6c9b84"/>
<path d="M0 60 C30 50 60 52 90 53 C115 53 140 55 162 58 V70 H0Z" fill="#8bc34a"/>
<path d="M40 66 C80 58 120 62 162 66 V70 H0 V67Z" fill="#74ad3f"/>
<path d="M114 56 C112 48 118 43 124 44 C130 42 136 48 136 56 C138 60 134 62 130 61 H118 C114 61 113 59 114 56Z" fill="#62a03a"/>
<path d="M138 60 C136 52 142 50 146 50 C148 44 158 44 162 48 V62 H138Z" fill="#4f8c30"/>
<path d="M6 24 L2 34 H4 L0 46 H3 L0 58 V64 H13 L10 52 H13 L9 42 H11 L8 33 H10Z" fill="#4e8a3c"/>
<path d="M55 37 L51 47 H53 L48 56 H51 L46 63 H65 L60 56 H63 L58 47 H60Z" fill="#5b9a3e"/>
<rect y="67" width="162" height="6" fill="#f0b368"/><path d="M0 67 H162 V68.500 H0Z" fill="#d9903f" opacity=".5"/>
<rect y="72" width="162" height="51" fill="url(#w2)"/>
<path d="M0 90 H30 M110 86 H162 M20 104 H70 M90 108 H150 M10 114 H50 M60 118 H130 M120 98 H162" stroke="#b9dbf4" stroke-width="1.600" opacity=".8"/>
<ellipse cx="86" cy="97" rx="68" ry="5.500" fill="#5fa9e2"/>
<path d="M23 81 L66 80 L70 100 L36 96Z" fill="#e7e7d0"/><path d="M66 80 L147 78.500 L136 95 L70 100Z" fill="#c8c6ae"/>
<path d="M25 85 L67 85 M68 85 L144 83" stroke="#b5b39c" stroke-width=".8"/><path d="M23 81 L147 78.500 L146 80 L24 82.500Z" fill="#d8d7c2"/>
<path d="M60 81 H84 V83.500 H58Z M88 82 H103 V83.500 H88Z" fill="#161616"/>
<!-- man -->
<path d="M66 66 C68 62 82 62 85 66 L87 82 H66Z" fill="#6b8fb6"/><path d="M80 64 L86 68 L85 76 L80 74Z" fill="#97a3ad"/>
<circle cx="75" cy="58" r="5" fill="#e8b48a"/><path d="M72 59 h6 v2.500 h-6Z" fill="#fff"/>
<path d="M69 55 C69 48 81 48 81 55Z" fill="#5f7186"/><path d="M66.500 55 H83.500 L82 57 H68Z" fill="#4f6074"/>
<path d="M67 69 L58 75 L66 79 L76 80" stroke="#e8b48a" stroke-width="2.400" fill="none"/>
<!-- boy -->
<circle cx="93" cy="63" r="8" fill="#b02f2f"/><circle cx="93" cy="67" r="5.500" fill="#f0c09a"/><path d="M88 64 C90 61 96 61 98 64 L98 62 C96 58 90 58 88 62Z" fill="#6b2a20"/>
<path d="M88 73 C90 71 98 71 100 73 L101 83 H88Z" fill="#d84848"/><path d="M98 76 L104 78 L100 81" stroke="#f0c09a" stroke-width="2" fill="none"/>
<!-- rods -->
<path d="M76 80 L60 72 C45 66 25 65 8 67" stroke="#3a2a20" stroke-width="1.200" fill="none"/><path d="M62 74 l4 4" stroke="#222" stroke-width="2.400"/>
<path d="M98 80 L108 73 C122 67 138 66 150 67" stroke="#3a2a20" stroke-width="1.200" fill="none"/><path d="M102 78 l3 3" stroke="#222" stroke-width="2.200"/>
<path d="M8 67 V92 M150 67 V97" stroke="#f2f7fb" stroke-width=".7"/>
<path d="M3.500 90 h2 v4 h-2Z" fill="#d33"/><path d="M154 98 h2 v4 h-2Z" fill="#e08a2a"/>
</svg></div><!--e2--><div class="pic" id="pic3" style="left:945px"><svg width="162" height="123" viewBox="0 0 162 123" style="display:block;margin:-1px">
<defs><linearGradient id="s3" x1="1" y1="0" x2=".35" y2=".75"><stop offset="0" stop-color="#9fd8ee"/><stop offset=".55" stop-color="#f3f3d4"/><stop offset="1" stop-color="#fdf6d2"/></linearGradient>
<linearGradient id="g3" x1="0" y1="0" x2="0" y2="1"><stop offset="0" stop-color="#86c84a"/><stop offset="1" stop-color="#3f8a2a"/></linearGradient>
<radialGradient id="c3" cx=".45" cy=".3" r=".7"><stop offset="0" stop-color="#1f5a26"/><stop offset=".7" stop-color="#2f7a33"/><stop offset="1" stop-color="#5aa84a"/></radialGradient>
<linearGradient id="t3" x1="0" y1="0" x2="1" y2="0"><stop offset="0" stop-color="#7b5134"/><stop offset=".5" stop-color="#b07a48"/><stop offset="1" stop-color="#8a5a36"/></linearGradient></defs>
<rect width="162" height="123" fill="url(#s3)"/>
<path d="M0 92 l2 -5 l2 5 l3 -8 l3 8 C14 88 22 86 28 92 L32 98 V108 H0Z M17 90 l3 -8 l3 8Z" fill="#7fc798"/><path d="M0 93 l3 -8 l3 9Z M16 92 l3 -9 l3 9Z" fill="#93b7a5"/>
<path d="M66 98 C70 90 78 88 84 92 C88 88 94 92 96 98 V104 H66Z" fill="#7fc798"/><path d="M68 92 l3 -9 l3 9Z M76 90 l3 -10 l3 10Z M92 98 l2.500 -7 l2.500 7Z" fill="#93b7a5"/>
<path d="M146 104 C150 98 158 98 162 102 V110 H146Z" fill="#7fc798"/><path d="M148 104 l5 -14 l5 14Z" fill="#93b7a5"/>
<path d="M0 112 C30 96 60 96 90 98 C120 98 145 102 162 108 V123 H0Z" fill="url(#g3)"/>
<path d="M0 123 C30 116 120 116 162 123Z" fill="#2f7a26" opacity=".6"/>
<circle cx="41.9" cy="106.0" r="0.9" fill="#f4f8ee"/><circle cx="29.6" cy="106.3" r="0.9" fill="#f4f8ee"/><circle cx="145.5" cy="118.5" r="1.1" fill="#f4f8ee"/><circle cx="39.7" cy="113.3" r="0.8" fill="#f4f8ee"/><circle cx="32.2" cy="106.7" r="0.8" fill="#f4f8ee"/><circle cx="147.0" cy="118.9" r="1.2" fill="#f4f8ee"/><circle cx="127.7" cy="109.0" r="0.8" fill="#f4f8ee"/><circle cx="101.3" cy="116.4" r="1.2" fill="#f4f8ee"/><circle cx="139.8" cy="108.8" r="1.0" fill="#f4f8ee"/><circle cx="108.1" cy="112.7" r="0.7" fill="#f4f8ee"/><circle cx="78.0" cy="104.6" r="1.3" fill="#f4f8ee"/><circle cx="137.6" cy="114.8" r="0.8" fill="#f4f8ee"/><circle cx="144.1" cy="115.6" r="1.2" fill="#f4f8ee"/><circle cx="134.9" cy="114.1" r="0.9" fill="#f4f8ee"/><circle cx="97.0" cy="111.1" r="0.7" fill="#f4f8ee"/><circle cx="52.4" cy="117.7" r="0.6" fill="#f4f8ee"/><circle cx="13.0" cy="115.9" r="0.8" fill="#f4f8ee"/><circle cx="87.3" cy="111.6" r="0.8" fill="#f4f8ee"/><circle cx="157.6" cy="112.6" r="0.9" fill="#f4f8ee"/><circle cx="36.8" cy="115.0" r="0.8" fill="#f4f8ee"/><circle cx="60.1" cy="116.5" r="0.8" fill="#f4f8ee"/><circle cx="90.9" cy="119.3" r="0.7" fill="#f4f8ee"/><circle cx="15.4" cy="110.2" r="1.1" fill="#f4f8ee"/><circle cx="99.5" cy="107.8" r="0.8" fill="#f4f8ee"/><circle cx="33.0" cy="112.3" r="0.6" fill="#f4f8ee"/><circle cx="112.0" cy="119.3" r="1.3" fill="#f4f8ee"/><circle cx="117.7" cy="120.4" r="0.6" fill="#f4f8ee"/><circle cx="49.9" cy="120.4" r="1.1" fill="#f4f8ee"/><circle cx="68.4" cy="120.0" r="1.0" fill="#f4f8ee"/><circle cx="130.3" cy="110.7" r="0.7" fill="#f4f8ee"/><circle cx="73.5" cy="105.5" r="0.9" fill="#f4f8ee"/><circle cx="152.2" cy="113.4" r="0.6" fill="#f4f8ee"/><circle cx="12.8" cy="109.6" r="1.1" fill="#f4f8ee"/><circle cx="61.1" cy="108.4" r="0.7" fill="#f4f8ee"/><circle cx="155.2" cy="114.8" r="0.7" fill="#f4f8ee"/><circle cx="15.0" cy="107.8" r="0.7" fill="#f4f8ee"/><circle cx="108.9" cy="106.8" r="0.6" fill="#f4f8ee"/><circle cx="80.6" cy="107.5" r="1.3" fill="#f4f8ee"/><circle cx="24.6" cy="113.9" r="1.1" fill="#f4f8ee"/><circle cx="68.2" cy="120.8" r="0.9" fill="#f4f8ee"/><circle cx="42.8" cy="111.1" r="0.6" fill="#f4f8ee"/><circle cx="70.0" cy="107.5" r="1.2" fill="#f4f8ee"/><circle cx="132.3" cy="113.8" r="0.6" fill="#f4f8ee"/><circle cx="44.7" cy="108.1" r="0.7" fill="#f4f8ee"/><circle cx="41.2" cy="118.8" r="0.7" fill="#f4f8ee"/><circle cx="13.8" cy="120.0" r="1.0" fill="#f4f8ee"/>
<!-- canopy -->
<path d="M0 0 H112 C114 6 108 10 104 12 C108 18 102 24 96 24 C100 32 94 38 88 38 C90 46 80 50 74 46 C70 52 60 52 56 47 C50 52 40 50 38 45 C30 48 22 44 20 38 C12 40 6 34 6 28 C2 28 0 26 0 22Z" fill="url(#c3)"/>
<path d="M97 20 C94 12 100 6 108 8 C112 2 124 2 128 8 C136 8 138 16 134 20 C136 28 126 32 120 30 C114 34 104 32 102 27 C98 27 96 24 97 20Z" fill="#4f9e40"/><path d="M101 20 C100 14 106 11 112 12 C118 9 128 12 128 18 C128 24 120 27 114 26 C108 28 102 25 101 20Z" fill="#3c8a35"/>
<!-- trunk -->
<path d="M47 6 L58 6 C58 30 60 60 68 98 C56 101 40 103 27 106 C40 80 46 50 47 6Z" fill="url(#t3)"/>
<path d="M48 12 L36 0 h4 L51 8Z M55 12 L62 0 h3 L58 14Z" fill="#9a683c"/>
<path d="M47 38 C42 30 34 26 24 18 L26 16 C36 22 46 26 50 32Z" fill="#94623a"/>
<path d="M57 42 C70 32 90 26 126 23 L126 24.500 C96 28 76 36 60 48Z" fill="#8a5a36"/><path d="M100 26 C108 20 114 14 120 10 M104 25 C112 22 118 18 124 17" stroke="#8a5a36" stroke-width=".8" fill="none"/>
<!-- crow -->
<path d="M76 14 C76 8 84 6 88 10 L90 14 L88 18 C90 26 86 36 82 42 L78 41 C74 34 74 22 76 14Z" fill="#1c2230"/><path d="M78 20 C80 26 80 34 79 40" stroke="#3b4a66" stroke-width="1" fill="none"/>
<path d="M86 17 C90 18 94 17 95 14 C98 18 94 24 88 23Z" fill="#f2a93b"/>
<!-- fox -->
<ellipse cx="118" cy="111" rx="22" ry="4" fill="#2f6e22" opacity=".5"/>
<path d="M127 102 C133 107 142 108 144.500 100 C146.500 92 141 84 141 76 C141 71 143 68 146 66 L138 63 C131 66 129 73 130.500 81 C132 88 135 95 131 98Z" fill="#e5671c"/>
<path d="M135 66 C138 61 148 61 154 65 C158 68 160 73 159.500 78 C156 74 152 73 148 75 C146 71 142 72 140 75 C139 72 137 70 135 66Z" fill="#f2f2ee"/>
<path d="M110 50 C114 49 118 52 118.500 57.500 C117 64 115.500 70 117 77 C119 86 127 92 130 101 C131 106 128 109 122 109.500 L106 110 C102 108 103 101 105.500 96 C106 91 104 86 102 80 C99.500 74 100 66 103 58 C104 54 106 51 110 50Z" fill="#e5671c"/>
<path d="M103 57.500 C100 63 98.500 69 99.500 75 C101 72 104 66 106.500 60Z" fill="#f1ede4"/>
<path d="M99 48.600 L104 51 C107 49 111 49 113.500 51 L119.500 46.900 L119 53 L124.200 55.100 L119 58 C117 61 112 62 107 60.500 L100.200 57 L103 55 C101.500 53 100 51 99 48.600Z" fill="#e5671c"/><path d="M99 48.600 l2.600 2.600 l-1.600 .6Z" fill="#3a1e14"/><path d="M114.500 52 l4.600 -4.200 l-.6 6Z" fill="#d9dde6"/><path d="M100.500 56.500 l4 -1" stroke="#3a1e14" stroke-width=".7"/>
<path d="M100 76 L92.500 72.800 M103 81 L95 83.500" stroke="#e5671c" stroke-width="2.800" fill="none" stroke-linecap="round"/>
<path d="M86 71.500 C88 70.500 91 71 93 72.500 L92 75 C90 75 87.500 74.500 86 73.500Z M91.500 83 C93 82.500 95 83 95.800 84.500 L94.500 88.500 C93 88.500 91.500 87.500 91.200 86Z" fill="#3a1e14"/>
<path d="M98 105 C102 103.500 108 104 110 106.500 L101 109 C99 108.500 98 107 98 105Z M101 110 C105 108.500 114 109 118 111 L104 113 C102 112.500 101 111.500 101 110Z" fill="#3a1e14"/>
</svg></div><!--e3-->
<div class="num" style="left:602.500px;top:286.500px">1</div><div class="num" style="left:772px;top:286.500px">2</div><div class="num" style="left:940px;top:286.500px">3</div>
<svg class="abs" style="left:576px;top:430px" width="530" height="26" viewBox="0 0 530 26"><path d="M12.5 0.5 H124 C131 0.5 132 6 134 12 C136 19 139 22.5 147 22.5 H529.5 V25.5 H12.5 A12.5 12.5 0 0 1 12.5 0.5Z" fill="#5ba6dc"/><text x="38" y="19" font-family="'Liberation Sans','DejaVu Sans',sans-serif" font-weight="bold" font-size="17" fill="#fff" letter-spacing=".9">Ойлан</text></svg>
<div class="abs" style="left:554px;top:543px;width:45px;height:45px;border-radius:50%;background:#fff"></div><div class="abs" style="left:559px;top:548px;width:35px;height:35px;border-radius:50%;background:#c9cce8;font-weight:bold;font-size:17px;line-height:35px;text-align:center;color:#231f20;letter-spacing:-.5px">18</div>
</div></div>
<div id="mainscroll" class="abs" style="left:1349px;top:158px;width:17px;height:570px;background:#f1f1f1;box-shadow:inset 1px 0 0 #fff,inset -1px 0 0 #fff">
<svg class="abs" style="left:4px;top:7px" width="9" height="6" viewBox="0 0 9 6"><path d="M0.500 5.500 L4.500 1 L8.500 5.500Z" fill="#505050"/></svg>
<div class="abs" style="left:2px;top:86px;width:13px;height:17px;background:#c1c1c1"></div>
<svg class="abs" style="left:4px;top:559px" width="9" height="6" viewBox="0 0 9 6"><path d="M0.500 0.500 L4.500 5 L8.500 0.500Z" fill="#505050"/></svg>
</div>
<div id="taskbar">
<svg class="abs" style="left:11px;top:6px" width="28" height="27" viewBox="0 0 28 27"><path d="M1 4.600 L12 3 V12.600 H1Z M13.600 2.800 L27 0.800 V12.600 H13.600Z M1 14.200 H12 V23.800 L1 22.200Z M13.600 14.200 H27 V26 L13.600 24Z" fill="#fff"/></svg>
<div class="abs" style="left:52px;top:1px;width:58px;height:38px;background:#7d6a4e;border:1px solid #93836a"></div>
<div class="abs" style="left:114px;top:1px;width:58px;height:38px;background:#9a8c78;border:1px solid #e6e1d9"></div>
<div class="abs" style="left:176px;top:1px;width:53px;height:38px;background:#7d6a4e;border:1px solid #93836a"></div>
<div class="abs" style="left:230px;top:1px;width:4px;height:38px;background:#7d6a4e;border:1px solid #93836a;border-left:none"></div>
<svg class="abs" style="left:64px;top:5px" width="34" height="31" viewBox="0 0 34 31"><path d="M2 5 H11 L13 7 H30 V26 H2Z" fill="#f3d77a"/><path d="M4 3 H14 V8 H4Z" fill="#fff"/><rect x="5" y="2" width="4" height="2" fill="#2eaa3a"/><path d="M13 5 H23 V9 H13Z" fill="#fff"/><rect x="14" y="4" width="4" height="2" fill="#d33"/><path d="M19 7 H30 V11 H19Z" fill="#fff"/><rect x="21" y="6" width="4" height="2" fill="#2a8be0"/><path d="M1.500 10 H31 L30 27 H2.500Z" fill="#f7e08c" stroke="#d8b64a" stroke-width=".8"/><path d="M6 30 V21 C6 18 8 17 11 17 H24 C27 17 29 18 29 21 V30 H23 V24 H12 V30Z" fill="#6fc3ee" stroke="#2a86c0" stroke-width=".8"/><path d="M9 16 l1 -4 l1 4 l4 1 l-4 1 l-1 4 l-1 -4 l-4 -1Z" fill="#fff" opacity=".9"/></svg>
<svg class="abs" style="left:128px;top:5px" width="30" height="30" viewBox="0 0 48 48"><circle cx="24" cy="24" r="23" fill="#fff"/><path d="M24 24 L4.080 12.500 A23 23 0 0 1 43.920 12.500Z" fill="#ea4335"/><path d="M24 1 A23 23 0 0 1 43.920 12.500 L24 12.500Z" fill="#ea4335"/><path d="M43.920 12.500 A23 23 0 0 1 24 47 L33.960 29.750 L24 12.500Z" fill="#fbbc05"/><path d="M4.080 12.500 L14.040 29.750 L24 24Z" fill="#34a853"/><path d="M4.080 12.500 A23 23 0 0 0 24 47 L33.960 29.750 L14.040 29.750Z" fill="#34a853"/><path d="M24 12.500 H43.920 L33.960 29.750Z" fill="#fbbc05"/><circle cx="24" cy="24" r="11" fill="#fff"/><circle cx="24" cy="24" r="8.600" fill="#4285f4"/></svg>
<svg class="abs" style="left:185px;top:4px" width="34" height="32" viewBox="0 0 34 32"><path d="M8 2 C14 0 22 0 27 1 V27 C20 26 12 27 7 29 C3 22 3 10 8 2Z" fill="#2b5fb8"/><path d="M10 4 C15 2.500 21 2.500 25 3 V25 C19 24.500 13 25 9 26.500 C6 20 6 11 10 4Z" fill="#fff"/><path d="M13 7 H30 L32 9 V30 H13Z" fill="#e9eef8" stroke="#9fb2d6" stroke-width=".7"/><text x="13.500" y="17" font-family="'Liberation Sans',sans-serif" font-weight="bold" font-style="italic" font-size="11" fill="#2b4fa0">W</text><path d="M25 10 H30 M25 13 H30 M25 16 H30 M15 20 H30 M15 23 H30 M15 26 H30" stroke="#2b4fa0" stroke-width="1.500"/></svg>
<svg class="abs" style="left:1154px;top:17px" width="9" height="6" viewBox="0 0 9 6"><path d="M0.500 5.500 L4.500 1 L8.500 5.500Z" fill="#fff"/></svg>
<svg class="abs" style="left:1175px;top:13px" width="17" height="17" viewBox="0 0 17 17"><rect x="7.500" y="2.500" width="7" height="12" rx="1" stroke="#fff" stroke-width="1.400" fill="none"/><rect x="9.500" y="1" width="3" height="1.500" fill="#fff"/><rect x="9.300" y="4.500" width="3.400" height="8.200" fill="#fff"/><path d="M2 2 V5 M5 2 V5" stroke="#fff" stroke-width="1.200"/><path d="M1 5 H6 V8 C6 9.500 5 10 4.200 10 V15 H2.800 V10 C2 10 1 9.500 1 8Z" fill="#fff"/></svg>
<svg class="abs" style="left:1199px;top:15px" width="16" height="13" viewBox="0 0 16 13"><path d="M0.500 12 H2.500 V10.500 H0.500Z M3.500 12 H5.500 V8.500 H3.500Z M6.500 12 H8.500 V6.500 H6.500Z M9.500 12 H11.500 V3.500 H9.500Z M12.500 12 H14.500 V0.500 H12.500Z" fill="#fff"/></svg>
<svg class="abs" style="left:1223px;top:13px" width="17" height="17" viewBox="0 0 17 17"><path d="M1 6 H3.500 L7.500 2 V15 L3.500 11 H1Z" fill="none" stroke="#fff" stroke-width="1.200"/><path d="M3 7 h2 l1.500 -1.500 v6 L5 10 H3Z" fill="#fff"/><path d="M9.500 6.300 C10.500 7.500 10.500 9.500 9.500 10.700 M11.500 4.500 C13.300 6.800 13.300 10.200 11.500 12.500 M13.600 3 C16 6 16 11 13.600 14" stroke="#fff" stroke-width="1.100" fill="none"/></svg>
<div class="abs" style="left:1244px;top:13px;width:42px;text-align:center;font-size:12.500px;line-height:16px;color:#fff;letter-spacing:-.3px">ҚАЗ</div>
<div class="abs" style="left:1286px;top:5px;width:68px;text-align:center;font-size:12px;line-height:16px;color:#fff;letter-spacing:-.3px">18:14</div>
<div class="abs" style="left:1282px;top:22px;width:76px;text-align:center;font-size:12px;line-height:16px;color:#fff;letter-spacing:-.3px">31.10.2021</div>
</div>

</div>
</body>
</html>
